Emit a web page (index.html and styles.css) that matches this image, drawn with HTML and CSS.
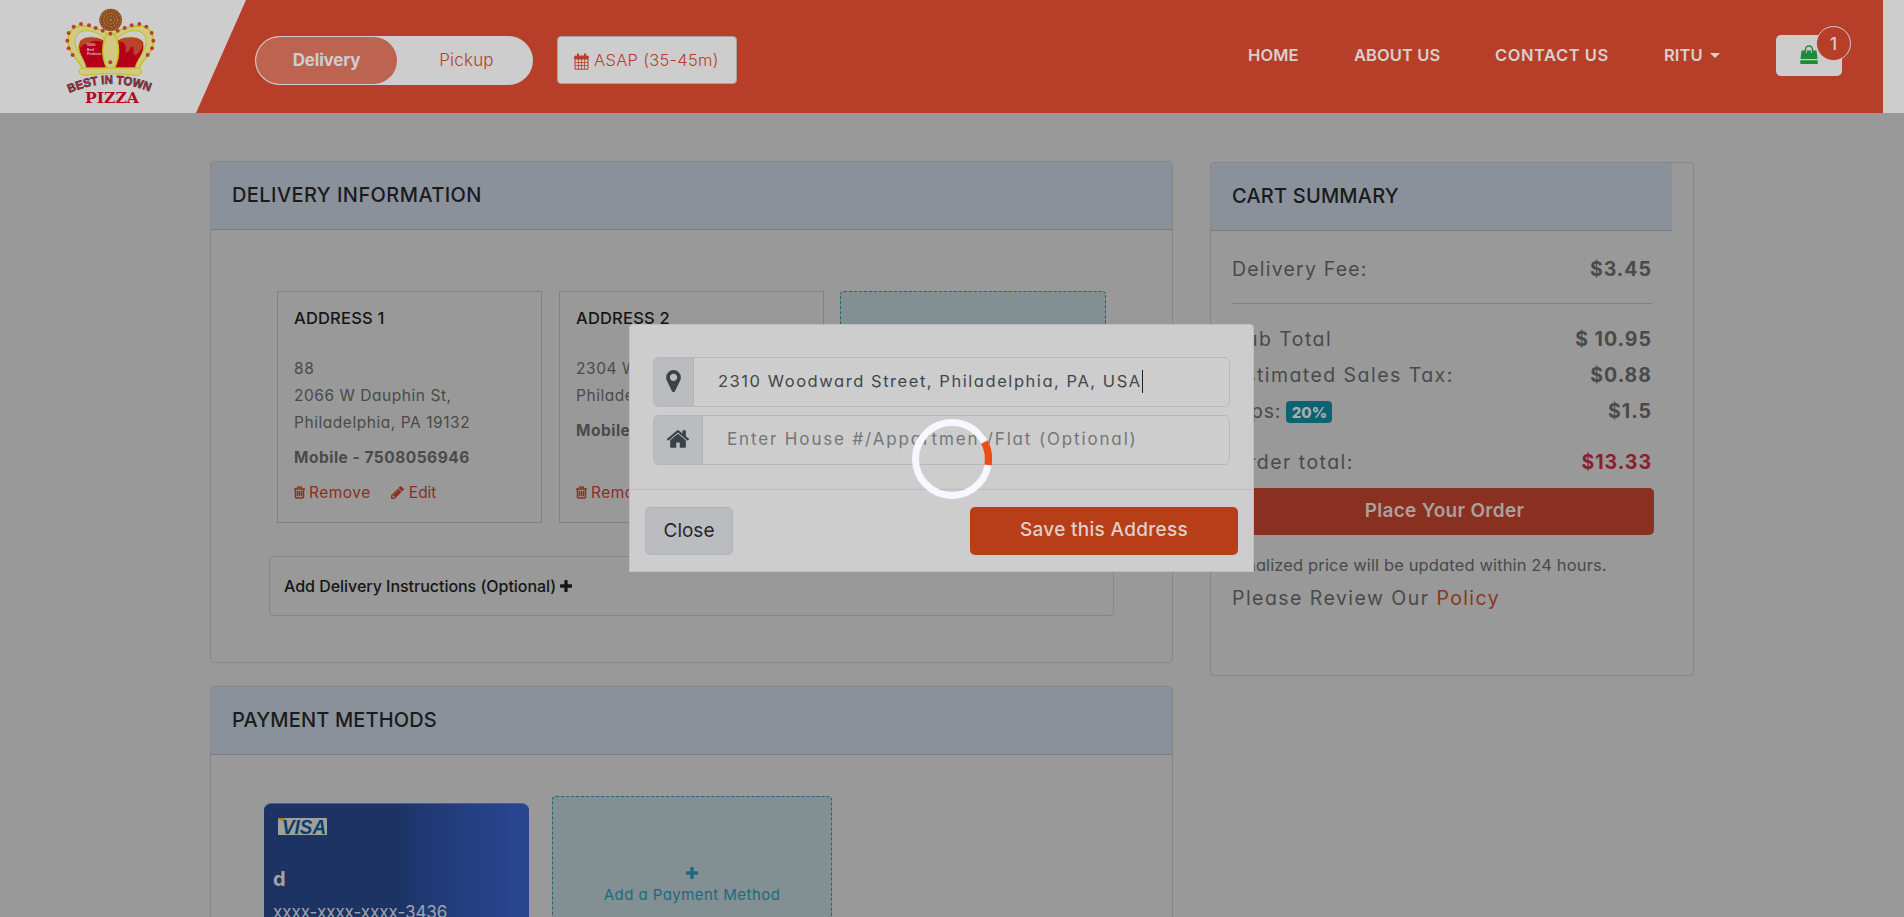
FILE: index.html
```html
<!DOCTYPE html>
<html lang="en">
<head>
<meta charset="utf-8">
<title>Best in Town Pizza - Checkout</title>
<link rel="stylesheet" href="styles.css">
</head>
<body>
<svg class="defs" width="0" height="0">
  <symbol id="trash" viewBox="192 128 1408 1536"><path d="M704 736v576q0 14-9 23t-23 9h-64q-14 0-23-9t-9-23v-576q0-14 9-23t23-9h64q14 0 23 9t9 23zm256 0v576q0 14-9 23t-23 9h-64q-14 0-23-9t-9-23v-576q0-14 9-23t23-9h64q14 0 23 9t9 23zm256 0v576q0 14-9 23t-23 9h-64q-14 0-23-9t-9-23v-576q0-14 9-23t23-9h64q14 0 23 9t9 23zm128 724v-948h-896v948q0 22 7 40.5t14.500 27 10.500 8.500h832q3 0 10.500-8.500t14.500-27 7-40.500zm-672-1076h448l-48-117q-7-9-17-11h-317q-10 2-17 11zm928 32v64q0 14-9 23t-23 9h-96v948q0 83-47 143.500t-113 60.500h-832q-66 0-113-58.500t-47-141.500v-952h-96q-14 0-23-9t-9-23v-64q0-14 9-23t23-9h309l70-167q15-37 54-63t79-26h320q40 0 79 26t54 63l70 167h309q14 0 23 9t9 23z"/></symbol>
  <symbol id="pencil" viewBox="128 128 1536 1536"><path d="M491 1536l91-91-235-235-91 91v107h128v128h107zm523-928q0-22-22-22-10 0-17 7l-542 542q-7 7-7 17 0 22 22 22 10 0 17-7l542-542q7-7 7-17zm-54-192l416 416-832 832h-416v-416zm683 96q0 53-37 90l-166 166-416-416 166-165q36-38 90-38 53 0 91 38l235 234q37 39 37 91z"/></symbol>
  <symbol id="plus" viewBox="192 128 1408 1408"><path d="M1600 736v192q0 40-28 68t-68 28h-416v416q0 40-28 68t-68 28h-192q-40 0-68-28t-28-68v-416h-416q-40 0-68-28t-28-68v-192q0-40 28-68t68-28h416v-416q0-40 28-68t68-28h192q40 0 68 28t28 68v416h416q40 0 68 28t28 68z"/></symbol>
</svg>

<header class="topbar">
  <div class="brand">
    <svg class="logo" viewBox="0 0 360 339">
      <circle cx="182" cy="60" r="34" fill="#8a4a22"/>
      <circle cx="182" cy="60" r="30" fill="none" stroke="#b07a3e" stroke-width="4" stroke-dasharray="4 5"/>
      <circle cx="182" cy="60" r="21" fill="none" stroke="#b07a3e" stroke-width="4" stroke-dasharray="5 4"/>
      <circle cx="182" cy="60" r="12" fill="none" stroke="#b07a3e" stroke-width="4" stroke-dasharray="4 4"/>
      <circle cx="182" cy="60" r="4" fill="#b07a3e"/>
      <g stroke="#c6bf0a" stroke-width="4">
        <path d="M98 208C92 180 54 166 54 122C54 86 82 72 112 79C142 84 168 92 176 108L176 206Z" fill="#cfca86"/>
        <path d="M266 208C272 180 310 166 310 122C310 86 282 72 252 79C222 84 196 92 188 108L188 206Z" fill="#cfca86"/>
      </g>
      <path d="M92 162C62 130 76 92 108 92C136 92 158 106 166 124L164 180Z" fill="#cdcdcd" stroke="#c6bf0a" stroke-width="3"/>
      <path d="M272 162C302 130 288 92 256 92C228 92 206 106 198 124L200 180Z" fill="#cdcdcd" stroke="#c6bf0a" stroke-width="3"/>
      <path d="M108 204C104 176 80 160 88 128C96 106 144 106 168 126V204Z" fill="#b40019" stroke="#c6bf0a" stroke-width="3"/>
      <path d="M256 204C260 176 288 160 280 128C270 106 220 106 196 126V204Z" fill="#b40019" stroke="#c6bf0a" stroke-width="3"/>
      <path d="M90 126C100 108 146 108 166 130C140 116 120 122 112 136C104 126 98 138 91 144Z" fill="#b9442c"/>
      <path d="M278 130C268 108 220 108 198 128C226 116 230 142 226 158C238 160 240 138 250 140C252 152 248 160 256 166C266 160 278 148 278 130Z" fill="#b9442c"/>
      <ellipse cx="182" cy="153" rx="24" ry="55" fill="#cfca80" stroke="#c6bf0a" stroke-width="4"/>
      <path d="M98 204H264Q276 206 274 216Q272 228 256 226Q180 216 106 226Q88 226 87 214Q88 206 98 204Z" fill="#d0cb83" stroke="#c6bf0a" stroke-width="3"/>
      <g fill="#b9402c">
        <circle cx="181" cy="101" r="6"/><circle cx="181" cy="187" r="6"/>
        <circle cx="158" cy="92" r="6"/><circle cx="137" cy="84" r="6"/><circle cx="117" cy="76" r="6"/><circle cx="93" cy="72" r="6"/><circle cx="71" cy="80" r="6"/><circle cx="56" cy="99" r="6"/><circle cx="52" cy="122" r="6"/><circle cx="56" cy="145" r="6"/><circle cx="68" cy="165" r="6"/>
        <circle cx="203" cy="92" r="6"/><circle cx="224" cy="84" r="6"/><circle cx="245" cy="76" r="6"/><circle cx="268" cy="72" r="6"/><circle cx="289" cy="80" r="6"/><circle cx="305" cy="99" r="6"/><circle cx="310" cy="122" r="6"/><circle cx="306" cy="145" r="6"/><circle cx="293" cy="165" r="6"/>
      </g>
      <g class="logo-note"><text x="111" y="138">100%</text><text x="111" y="152">Beef</text><text x="111" y="166">Products</text></g>
      <path id="arc" d="M58 279Q180 226 303 276" fill="none"/>
      <text class="logo-arc"><textPath href="#arc" textLength="248" lengthAdjust="spacingAndGlyphs">BEST IN TOWN</textPath></text>
      <text class="logo-pizza" x="105" y="308" textLength="162" lengthAdjust="spacingAndGlyphs">PIZZA</text>
    </svg>
  </div>
  <div class="bar">
    <div class="toggle"><span class="toggle-on">Delivery</span><span class="toggle-off">Pickup</span></div>
    <div class="asap">
      <svg class="i-cal" viewBox="0 0 15 17"><path d="M1 3h13v13.200H1z" fill="none" stroke="currentColor"/><path d="M.5 3h14v3.500H.5zM3 .5h2v3H3zM10 .5h2v3h-2z" fill="currentColor"/><path d="M4.500 6v10M7.500 6v10M10.500 6v10M1 9.500h13M1 12.500h13" stroke="currentColor" stroke-width=".8"/></svg>
      <span>ASAP (35-45m)</span>
    </div>
    <nav class="nav">
      <a class="n-home">HOME</a><a class="n-about">ABOUT US</a><a class="n-contact">CONTACT US</a><a class="n-user">RITU <i class="caret"></i></a>
    </nav>
    <div class="cart-btn">
      <svg class="i-bag" viewBox="0 0 18 20"><path d="M5.500 8V4.500a3.500 3.500 0 0 1 7 0V8" fill="none" stroke="#208a38" stroke-width="1.500"/><path d="M1.500 5.500h15l1 8.500H.5zM.3 15.200h17.400v3.800H.3z" fill="#208a38"/><path d="M6.500 5.500v2.300M11.500 5.500v2.300" stroke="#cdcdcd" stroke-width=".9"/></svg>
      <span class="count">1</span>
    </div>
  </div>
</header>

<main class="page">
  <div class="left">
    <section class="card delivery">
      <h2 class="card-title t-info">DELIVERY INFORMATION</h2>
      <div class="addresses">
        <article class="address">
          <h3>ADDRESS 1</h3>
          <p>88</p><p>2066 W Dauphin St,</p><p>Philadelphia, PA 19132</p>
          <strong>Mobile - 7508056946</strong>
          <div class="acts"><a><svg class="i-trash"><use href="#trash"/></svg>Remove</a><a class="edit"><svg class="i-pencil"><use href="#pencil"/></svg>Edit</a></div>
        </article>
        <article class="address">
          <h3>ADDRESS 2</h3>
          <p>2304 W</p><p>Philade</p>
          <strong>Mobile</strong>
          <div class="acts low"><a><svg class="i-trash"><use href="#trash"/></svg>Remove</a></div>
        </article>
        <div class="add-address"></div>
      </div>
      <div class="instructions"><span>Add Delivery Instructions (Optional)</span><svg class="i-plus"><use href="#plus"/></svg></div>
    </section>
    <section class="card payment">
      <h2 class="card-title t-pay">PAYMENT METHODS</h2>
      <div class="methods">
        <div class="visa">
          <svg class="visa-logo" viewBox="0 0 49 17"><rect width="49" height="17" fill="#a0a09c"/><path d="M0 0H7L9 8Q6 3 0 1Z" fill="#b8801c"/><text x="4" y="15.500" textLength="44" lengthAdjust="spacingAndGlyphs">VISA</text></svg>
          <b>d</b>
          <span class="num">xxxx-xxxx-xxxx-3436</span>
        </div>
        <div class="add-pay"><svg class="i-plus"><use href="#plus"/></svg><span>Add a Payment Method</span></div>
      </div>
    </section>
  </div>

  <aside class="card cart">
    <h2 class="card-title t-cart">CART SUMMARY</h2>
    <div class="rows">
      <div class="row fee"><span>Delivery Fee:</span><b>$3.45</b></div>
      <div class="row"><span>Sub Total</span><b>$ 10.95</b></div>
      <div class="row"><span>Estimated Sales Tax:</span><b>$0.88</b></div>
      <div class="row tips"><span>Tips: <em>20%</em></span><b>$1.5</b></div>
      <div class="row total"><span>Order total:</span><b>$13.33</b></div>
    </div>
    <div class="place"><span>Place Your Order</span></div>
    <p class="final">Finalized price will be updated within 24 hours.</p>
    <p class="policy">Please Review Our <a>Policy</a></p>
  </aside>
</main>

<div class="modal">
  <div class="modal-body">
    <div class="field">
      <span class="addon pin"><svg viewBox="384 128 1024 1536"><path d="M1152 640q0-106-75-181t-181-75-181 75-75 181 75 181 181 75 181-75 75-181zm256 0q0 109-33 179l-364 774q-16 33-47.500 52t-67.500 19-67.500-19-46.500-52l-365-774q-33-70-33-179 0-212 150-362t362-150 362 150 150 362z"/></svg></span>
      <span class="value">2310 Woodward Street, Philadelphia, PA, USA</span><i class="cursor"></i>
    </div>
    <div class="field">
      <span class="addon house"><svg viewBox="90 250 1612 1290"><path d="M1472 992v480q0 26-19 45t-45 19h-384v-384h-256v384h-384q-26 0-45-19t-19-45v-480q0-1 .5-3t.5-3l575-474 575 474q1 2 1 6zm223-69l-62 74q-8 9-21 11h-3q-13 0-21-7l-692-577-692 577q-12 8-24 7-13-2-21-11l-62-74q-8-10-7-23.500t11-21.500l719-599q32-26 76-26t76 26l244 204v-195q0-14 9-23t23-9h192q14 0 23 9t9 23v408l219 182q10 8 11 21.500t-7 23.500z"/></svg></span>
      <span class="placeholder">Enter House #/Appartment/Flat (Optional)</span>
    </div>
  </div>
  <div class="modal-foot"><div class="close"><span>Close</span></div><div class="save"><span>Save this Address</span></div></div>
</div>
<svg class="spinner" viewBox="-40 -40 80 80"><circle r="36.500" fill="none" stroke="#f7f7ff" stroke-width="7"/><path d="M32.400 -16.900A36.500 36.500 0 0 1 36 6" fill="none" stroke="#e85018" stroke-width="7.500"/></svg>
</body>
</html>
```

FILE: styles.css
```css
* { box-sizing: border-box; margin: 0; padding: 0; }
html { height: 917px; overflow: hidden; }
body {
  width: 1904px; height: 917px; overflow: hidden; position: relative;
  background: #999; color: #4a4a4a;
  font-family: Inter, "Liberation Sans", sans-serif;
  font-feature-settings: "cv11";
}
svg { display: block; flex: none; }
.defs { position: absolute; }
span, a, b, p, strong { white-space: nowrap; }

.topbar { height: 113px; background: #cdcdcd; display: flex; }
.brand { width: 196px; padding-left: 50px; }
.logo { width: 120px; height: 113px; }
.logo-note { font: 700 10px "Liberation Sans", sans-serif; fill: #d8c8c8; }
.logo-arc { font: 700 36px "Liberation Sans", sans-serif; fill: #c3283c; stroke: #3c3030; stroke-width: 1.8px; }
.logo-pizza { font: 700 44px "DejaVu Serif", serif; fill: #b80720; }
.bar {
  width: 1687px; height: 113px; background: #b73f29;
  clip-path: polygon(50px 0, 100% 0, 100% 100%, 0 100%);
  display: flex; align-items: flex-start; padding-left: 59px;
}
.toggle { width: 278px; height: 49px; margin-top: 36px; border: 1px solid #cdcdcd; border-radius: 25px; background: #cdcdcd; display: flex; overflow: hidden; }
.toggle span { flex: none; line-height: 47px; text-align: center; font-size: 17px; }
.toggle-on { width: 141px; background: #bc6450; border-radius: 24px; color: #cdcdcd; font-weight: 700; letter-spacing: -.2px; }
.toggle-off { width: 137px; padding-left: 2px; color: #b73f29; }
.asap { width: 180px; height: 48px; margin: 36px 0 0 24px; border: 1px solid #a8a09e; border-radius: 4px; background: #cdcdcd; color: #b73f29; display: flex; align-items: center; gap: 5px; padding-left: 16px; font-size: 16.500px; letter-spacing: .3px; }
.toggle .toggle-off, .asap { font-weight: 350; }
.toggle .toggle-off { letter-spacing: .2px; }
.i-cal { width: 15px; height: 17px; margin-top: 2px; }
.nav { width: 528px; margin-left: 511px; display: flex; color: #d6d0ce; font-size: 16.500px; font-weight: 580; line-height: 110px; }
.nav a { letter-spacing: .1px; }
.nav .n-contact { width: 169px; letter-spacing: .550px; }
.n-home { width: 106px; } .n-about { width: 141px; }
.caret { display: inline-block; margin-left: 3px; vertical-align: 3px; border: 5px solid transparent; border-top-color: #d6d0ce; border-bottom: 0; }
.cart-btn { width: 66px; height: 41px; margin-top: 35px; background: #cdcdcd; border-radius: 5px; position: relative; padding: 10px 0 0 24px; }
.i-bag { width: 18px; height: 20px; }
.count { position: absolute; left: 40px; top: -9px; width: 35px; height: 35px; border: 1px solid #cdcdcd; border-radius: 50%; background: #b73f29; color: #d6d0ce; text-align: center; line-height: 34px; font-size: 17px; font-weight: 500; }

.page { height: 804px; overflow: hidden; display: flex; align-items: flex-start; gap: 37px; padding: 48px 0 0 210px; }
.left { width: 963px; display: grid; gap: 24px; }
.card { border: 1px solid #868686; border-radius: 4px; }
.card-title { height: 68px; padding-left: 21px; background: #8a919b; border-bottom: 1px solid #777c86; color: #1b1b1b; font-size: 20px; font-weight: 500; line-height: 66px; letter-spacing: .420px; border-radius: 3px 3px 0 0; white-space: nowrap; font-feature-settings: normal; }
.delivery { height: 502px; }
.payment { height: 260px; margin-top: -1px; }
.t-pay { letter-spacing: .15px; }
.addresses { display: flex; gap: 17px; padding: 61px 0 0 66px; }
.address { width: 265px; height: 232px; border: 1px solid #818181; padding: 13px 0 0 16px; font-size: 15.500px; }
.address h3 { height: 50px; color: #151515; font-size: 16.500px; font-weight: 550; line-height: 26px; letter-spacing: .2px; font-feature-settings: normal; }
.address p { line-height: 27px; letter-spacing: .55px; }
.address strong { display: block; line-height: 27px; margin-top: 8px; letter-spacing: .5px; }
.acts { display: flex; color: #8b2f1e; line-height: 27px; margin-top: 8px; letter-spacing: .5px; }
.acts.low { margin-top: 35px; }
.acts a { display: flex; align-items: center; gap: 4px; }
.acts .edit { margin-left: 20px; gap: 5px; letter-spacing: 0; }
.i-trash { width: 11px; height: 13px; fill: currentColor; stroke: currentColor; stroke-width: 60; }
.i-pencil { width: 13px; height: 13px; fill: currentColor; }
.add-address { width: 266px; height: 232px; margin-left: -1px; border: 1px dashed #1b667a; border-radius: 4px; background: #828f93; }
.instructions { width: 845px; height: 60px; margin: 33px 0 0 58px; border: 1px solid #868686; border-radius: 4px; padding-left: 14px; display: flex; align-items: center; gap: 4px; color: #151515; font-size: 16px; font-weight: 500; letter-spacing: -.03px; font-feature-settings: normal; }
.i-plus { width: 12px; height: 12px; fill: currentColor; }
.methods { display: flex; align-items: flex-start; padding: 41px 0 0 53px; }
.visa { width: 265px; height: 160px; margin-top: 7px; border-radius: 7px; border-top: 1px solid #4a5f8c; background: linear-gradient(90deg, #1c3364 50%, #1f3871 58%, #29458f 95%); color: #a2a4ab; padding: 14px 0 0 9px; }
.visa-logo { width: 49px; height: 17px; margin-left: 5px; font: italic 700 20px "Liberation Sans", sans-serif; fill: #063f6c; }
.visa b { display: block; margin-top: 31px; font-size: 20px; line-height: 26px; }
.num { display: block; margin-top: 7px; font-size: 17px; line-height: 26px; letter-spacing: -.05px; }
.add-pay { width: 280px; height: 200px; margin-left: 23px; border: 1px dashed #1b667a; border-radius: 4px; background: #828f93; color: #1c6a80; display: flex; flex-direction: column; align-items: center; padding-top: 70px; font-size: 15px; letter-spacing: .45px; }
.add-pay span { line-height: 26px; margin-top: 3px; }

.cart { width: 484px; height: 514px; margin-top: 1px; font-size: 19.500px; letter-spacing: 1.450px; }
.t-cart { width: 461px; letter-spacing: .2px; }
.rows { width: 420px; margin-left: 21px; }
.row { display: flex; justify-content: space-between; line-height: 36px; }
.row b { letter-spacing: 1px; }
.fee { height: 73px; padding-top: 20px; border-bottom: 1px solid #7f7f7f; margin-bottom: 17px; letter-spacing: 1.200px; }
.tips > span { letter-spacing: .8px; }
.tips em { display: inline-block; width: 46px; height: 22px; margin-left: -1px; border-radius: 4px; background: #0e6372; color: #a9afb1; font-style: normal; font-weight: 800; font-size: 15px; line-height: 23px; text-align: center; letter-spacing: 0; vertical-align: 0; }
.total { margin-top: 15px; }
.total b { color: #8a1f2c; }
.place { width: 446px; height: 47px; margin: 8px 0 0 -3px; border-radius: 5px; background: #893020; color: #a9a19f; text-align: center; line-height: 45px; font-size: 19px; font-weight: 600; letter-spacing: .3px; font-feature-settings: normal; padding-left: 27px; }
.final { margin: 17px 0 0 21px; line-height: 26px; font-size: 16.500px; letter-spacing: .130px; }
.policy { margin: 7px 0 0 21px; line-height: 26px; }
.policy a { color: #8b3519; letter-spacing: 1.400px; }

.modal { position: absolute; left: 629px; top: 324px; width: 625px; height: 248px; background: #cdcdcd; border: 1px solid #bdbdbd; border-radius: 4px 4px 0 0; }
.modal-body { height: 165px; padding: 32px 23px 0; border-bottom: 1px solid #bcbcbe; display: grid; gap: 8px; align-content: start; }
.field { height: 50px; border: 1px solid #b7b8bc; border-radius: 5px; display: flex; align-items: center; overflow: hidden; }
.addon { height: 50px; background: #babcc0; border-right: 1px solid #afb2b6; display: flex; align-items: center; justify-content: center; }
.addon svg { fill: #3b4248; }
.pin { width: 40px; } .pin svg { width: 15px; height: 22px; margin-top: -3px; }
.house { width: 49px; } .house svg { width: 22px; height: 18px; margin-top: -3px; }
.value { margin: -3px 0 0 24px; font-size: 16.500px; letter-spacing: 1.550px; color: #42474c; }
.cursor { width: 1px; height: 23px; margin-top: -2px; background: #222; }
.placeholder { margin: -3px 0 0 24px; font-size: 17px; letter-spacing: 1.850px; color: #747678; }
.modal-foot { display: flex; justify-content: space-between; padding: 17px 15px 0; font-size: 19px; line-height: 46px; text-align: center; font-feature-settings: normal; }
.close { width: 88px; height: 48px; background: #babcc0; border: 1px solid #b0b2b7; border-radius: 5px; color: #25282b; line-height: 45px; }
.save { width: 268px; height: 48px; background: #b83e17; border-radius: 5px; color: #ddd0ca; font-weight: 500; letter-spacing: .3px; }
.spinner { position: absolute; left: 912px; top: 419px; width: 80px; height: 80px; }
```
